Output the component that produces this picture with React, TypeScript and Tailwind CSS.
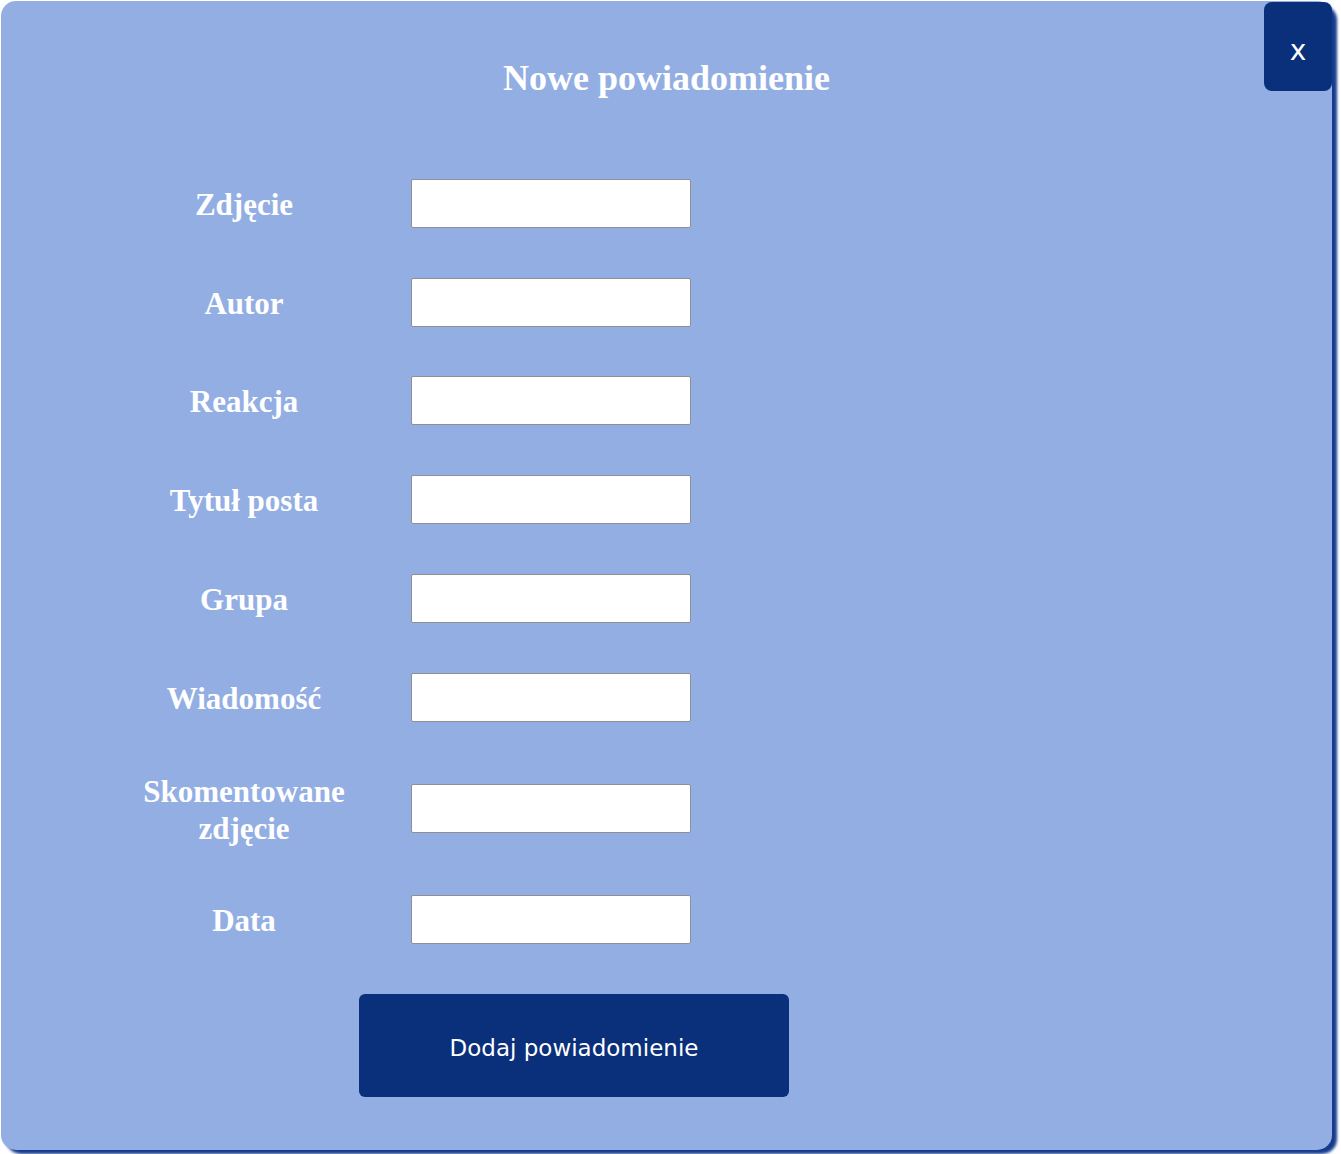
import { useState } from "react";

const FIELDS = [
  "Zdjęcie",
  "Autor",
  "Reakcja",
  "Tytuł posta",
  "Grupa",
  "Wiadomość",
  "Skomentowane zdjęcie",
  "Data",
];

export default function App() {
  const [values, setValues] = useState<Record<string, string>>({});

  return (
    <div className="min-h-[1154px] w-full bg-white p-px">
      <div className="relative h-[1149px] w-[1331px] rounded-[15px] bg-[#93aee3] pt-[57px] shadow-[5px_4px_3px_#153b8c]">
        <button className="absolute right-0 top-px flex h-[89px] w-[68px] items-center justify-center rounded-lg bg-[#0a2f7b] pt-[8px] font-['DejaVu_Sans',sans-serif] text-[28px] text-white">
          x
        </button>

        <h1 className="text-center font-['Liberation_Serif',serif] text-[36px] font-bold leading-[41px] text-white">
          Nowe powiadomienie
        </h1>

        <form className="mt-[55px] flex flex-col pl-[138px]" onSubmit={(e) => e.preventDefault()}>
          {FIELDS.map((f) => (
            <div key={f} className="flex items-center py-[24.9px]">
              <label className="w-[210px] translate-y-px text-center font-['Liberation_Serif',serif] text-[31px] font-bold leading-[37px] text-white">
                {f}
              </label>
              <input
                value={values[f] ?? ""}
                onChange={(e) => setValues({ ...values, [f]: e.target.value })}
                className="ml-[62px] h-[49px] w-[280px] rounded-[2px] border border-[#8f8f95] bg-white px-2 text-base outline-none"
              />
            </div>
          ))}
          <button
            type="submit"
            className="ml-[220px] mt-[24.6px] flex h-[103px] w-[430px] items-center justify-center rounded-md bg-[#0a2f7b] pt-[5px] font-['DejaVu_Sans',sans-serif] text-[23px] text-white"
          >
            Dodaj powiadomienie
          </button>
        </form>
      </div>
    </div>
  );
}
